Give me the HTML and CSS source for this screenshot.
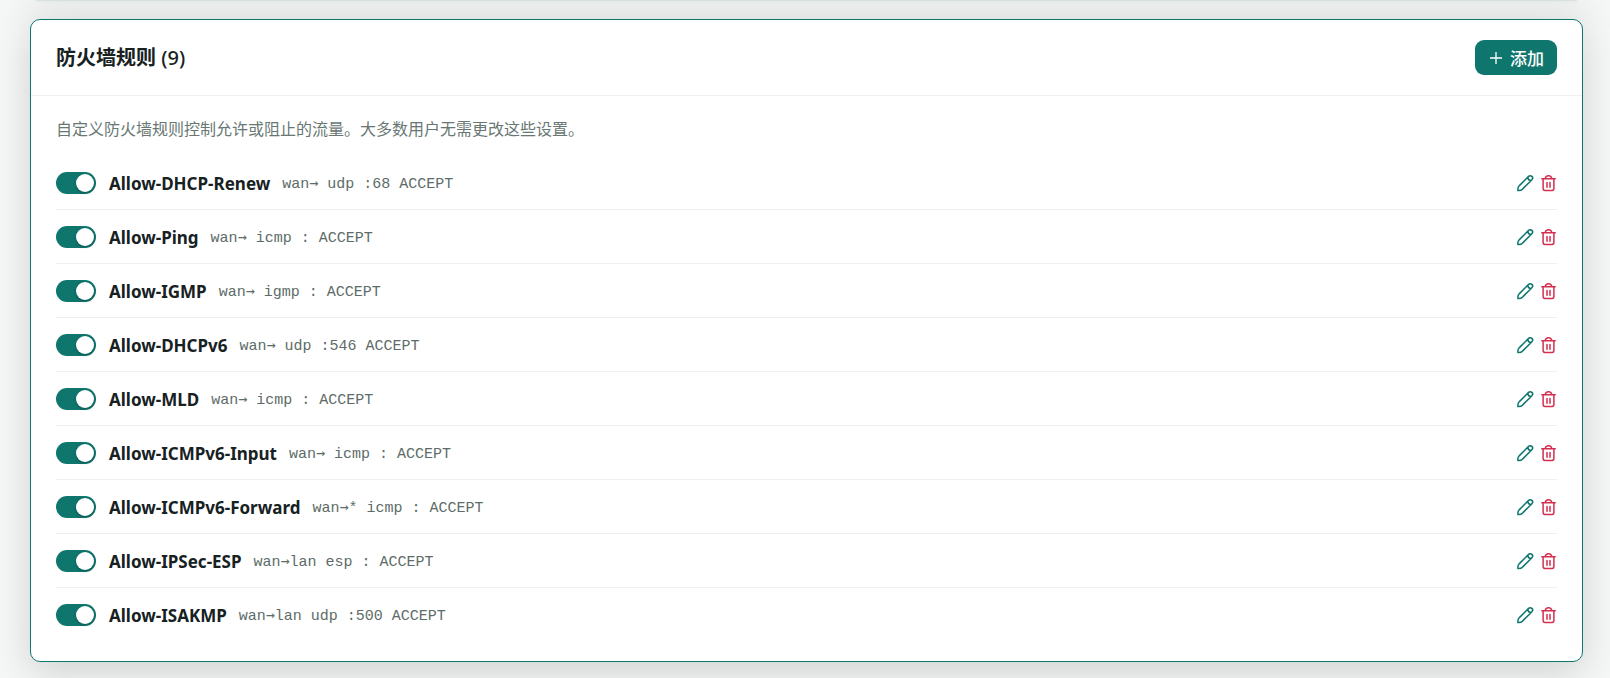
FILE: index.html
```html
<!DOCTYPE html>
<html lang="zh-CN">
<head>
<meta charset="utf-8">
<meta name="viewport" content="width=device-width, initial-scale=1">
<title>防火墙规则</title>
<link rel="stylesheet" href="styles.css">
</head>
<body>
<svg class="sprite" aria-hidden="true">
  <symbol id="pencil" viewBox="0 0 18 18"><path d="M1.9 16.4Q1.5 13.6 3.4 11.6L12.6 2.4a2.2 2.2 0 0 1 3.3 3.3L6.7 14.9Q4.8 16.9 1.9 16.4ZM11.8 3.4q.2 3 3.1 3.2"/></symbol>
  <symbol id="trash" viewBox="0 0 18 18"><path d="M2.8 4.7h13.4M6.2 4.7q.4-3 3.3-3t3.3 3M4.1 4.8v9.8q0 1.8 1.8 1.8h7.2q1.8 0 1.8-1.8V4.8M8 8.4v4.8M11 8.4v4.8"/></symbol>
</svg>
<main class="page">
  <div class="previous-card"></div>
  <section class="card">
    <header class="card-header">
      <h2 class="card-title">防火墙规则 <span class="count">(9)</span></h2>
      <button class="add-button" type="button"><svg class="plus" viewBox="0 0 14 14" aria-hidden="true"><path d="M7 1v12M1 7h12"/></svg>添加</button>
    </header>
    <div class="card-body">
      <p class="description">自定义防火墙规则控制允许或阻止的流量。大多数用户无需更改这些设置。</p>
      <ul class="rules" id="rules"></ul>
    </div>
  </section>
</main>
<script src="rules.js"></script>
</body>
</html>
```
FILE: rules.js
```js
const rules = [
  ["Allow-DHCP-Renew", "wan", "", "udp :68 ACCEPT"],
  ["Allow-Ping", "wan", "", "icmp : ACCEPT"],
  ["Allow-IGMP", "wan", "", "igmp : ACCEPT"],
  ["Allow-DHCPv6", "wan", "", "udp :546 ACCEPT"],
  ["Allow-MLD", "wan", "", "icmp : ACCEPT"],
  ["Allow-ICMPv6-Input", "wan", "", "icmp : ACCEPT"],
  ["Allow-ICMPv6-Forward", "wan", "*", "icmp : ACCEPT"],
  ["Allow-IPSec-ESP", "wan", "lan", "esp : ACCEPT"],
  ["Allow-ISAKMP", "wan", "lan", "udp :500 ACCEPT"],
];

document.getElementById("rules").innerHTML = rules.map(([name, from, to, match], i) => `
  <li class="rule">
    <input class="toggle" type="checkbox" role="switch" id="rule-${i}" checked>
    <label class="rule-name" for="rule-${i}">${name}</label>
    <code class="rule-detail">${from}<span class="arrow">→</span>${to} ${match}</code>
    <span class="actions">
      <button class="icon-button edit" type="button" aria-label="编辑 ${name}"><svg class="icon"><use href="#pencil"/></svg></button>
      <button class="icon-button remove" type="button" aria-label="删除 ${name}"><svg class="icon"><use href="#trash"/></svg></button>
    </span>
  </li>`).join("");
```
FILE: styles.css
```css
* { box-sizing: border-box; }

body {
  margin: 0;
  background: #f5f8f7;
  color: #17211f;
  font-family: "Noto Sans", "Noto Sans CJK SC", sans-serif;
}

.sprite { display: none; }

.page {
  min-height: 100vh;
  padding: 0 27px 14px 30px;
  overflow: hidden;
}

.previous-card {
  height: 1px;
  margin: 0 6px 18px;
  background: #dbe3e1;
  box-shadow: 0 0 3px #d3dfdc, 0 4px 40px 16px rgba(0, 0, 0, 0.05);
}

.card {
  border: 1px solid #0f766e;
  border-radius: 10px;
  background: #fff;
  box-shadow: 0 10px 40px rgba(0, 0, 0, 0.16);
}

.card-header {
  display: flex;
  align-items: center;
  justify-content: space-between;
  padding: 20px 25px;
  border-bottom: 1px solid #edf2f1;
}

.card-title {
  margin: 0;
  font-size: 20px;
  font-weight: 600;
  line-height: 35px;
}

.count { font-weight: 500; }

.add-button {
  display: flex;
  align-items: center;
  gap: 7px;
  height: 35px;
  padding: 0 13px 0 14px;
  border: 0;
  border-radius: 9px;
  background: #0f766e;
  color: #fff;
  font: 500 17px "Noto Sans", "Noto Sans CJK SC", sans-serif;
}

.plus {
  width: 14px;
  height: 14px;
  fill: none;
  stroke: currentColor;
  stroke-width: 1.3;
}

.card-body { padding: 20px 25px 19px; }

.description {
  margin: 0 0 14px;
  color: #687773;
  font-size: 16px;
  line-height: 26px;
}

.rules {
  margin: 0;
  padding: 0;
  list-style: none;
}

.rule {
  display: flex;
  align-items: center;
  gap: 12px;
  height: 54px;
  border-bottom: 1px solid #edf2f1;
}

.rule:last-child { border-bottom: 0; }

.toggle {
  appearance: none;
  display: flex;
  align-items: center;
  width: 40px;
  height: 22px;
  margin: 0;
  padding: 2px;
  border-radius: 11px;
  background: #bccac6;
}

.toggle::before {
  content: "";
  width: 18px;
  height: 18px;
  border-radius: 50%;
  background: #fff;
  box-shadow: 0 1px 3px rgba(0, 0, 0, 0.3);
}

.toggle:checked {
  justify-content: flex-end;
  background: #0f766e;
}

.rule-name {
  padding: 2px 0 0 1px;
  font-size: 17px;
  font-weight: 700;
  line-height: 24px;
}

.rule-detail {
  padding-top: 2px;
  color: #5d6c68;
  font: 15px/20px "Liberation Mono", monospace;
}

.arrow { font-family: "DejaVu Sans Mono", monospace; }

.actions {
  display: flex;
  gap: 5px;
  margin-left: auto;
}

.icon-button {
  display: flex;
  padding: 0;
  border: 0;
  background: none;
}

.edit { color: #0f766e; }
.remove { color: #d42e50; }

.icon {
  width: 18px;
  height: 18px;
  fill: none;
  stroke: currentColor;
  stroke-width: 1.5;
  stroke-linecap: round;
  stroke-linejoin: round;
}
```
